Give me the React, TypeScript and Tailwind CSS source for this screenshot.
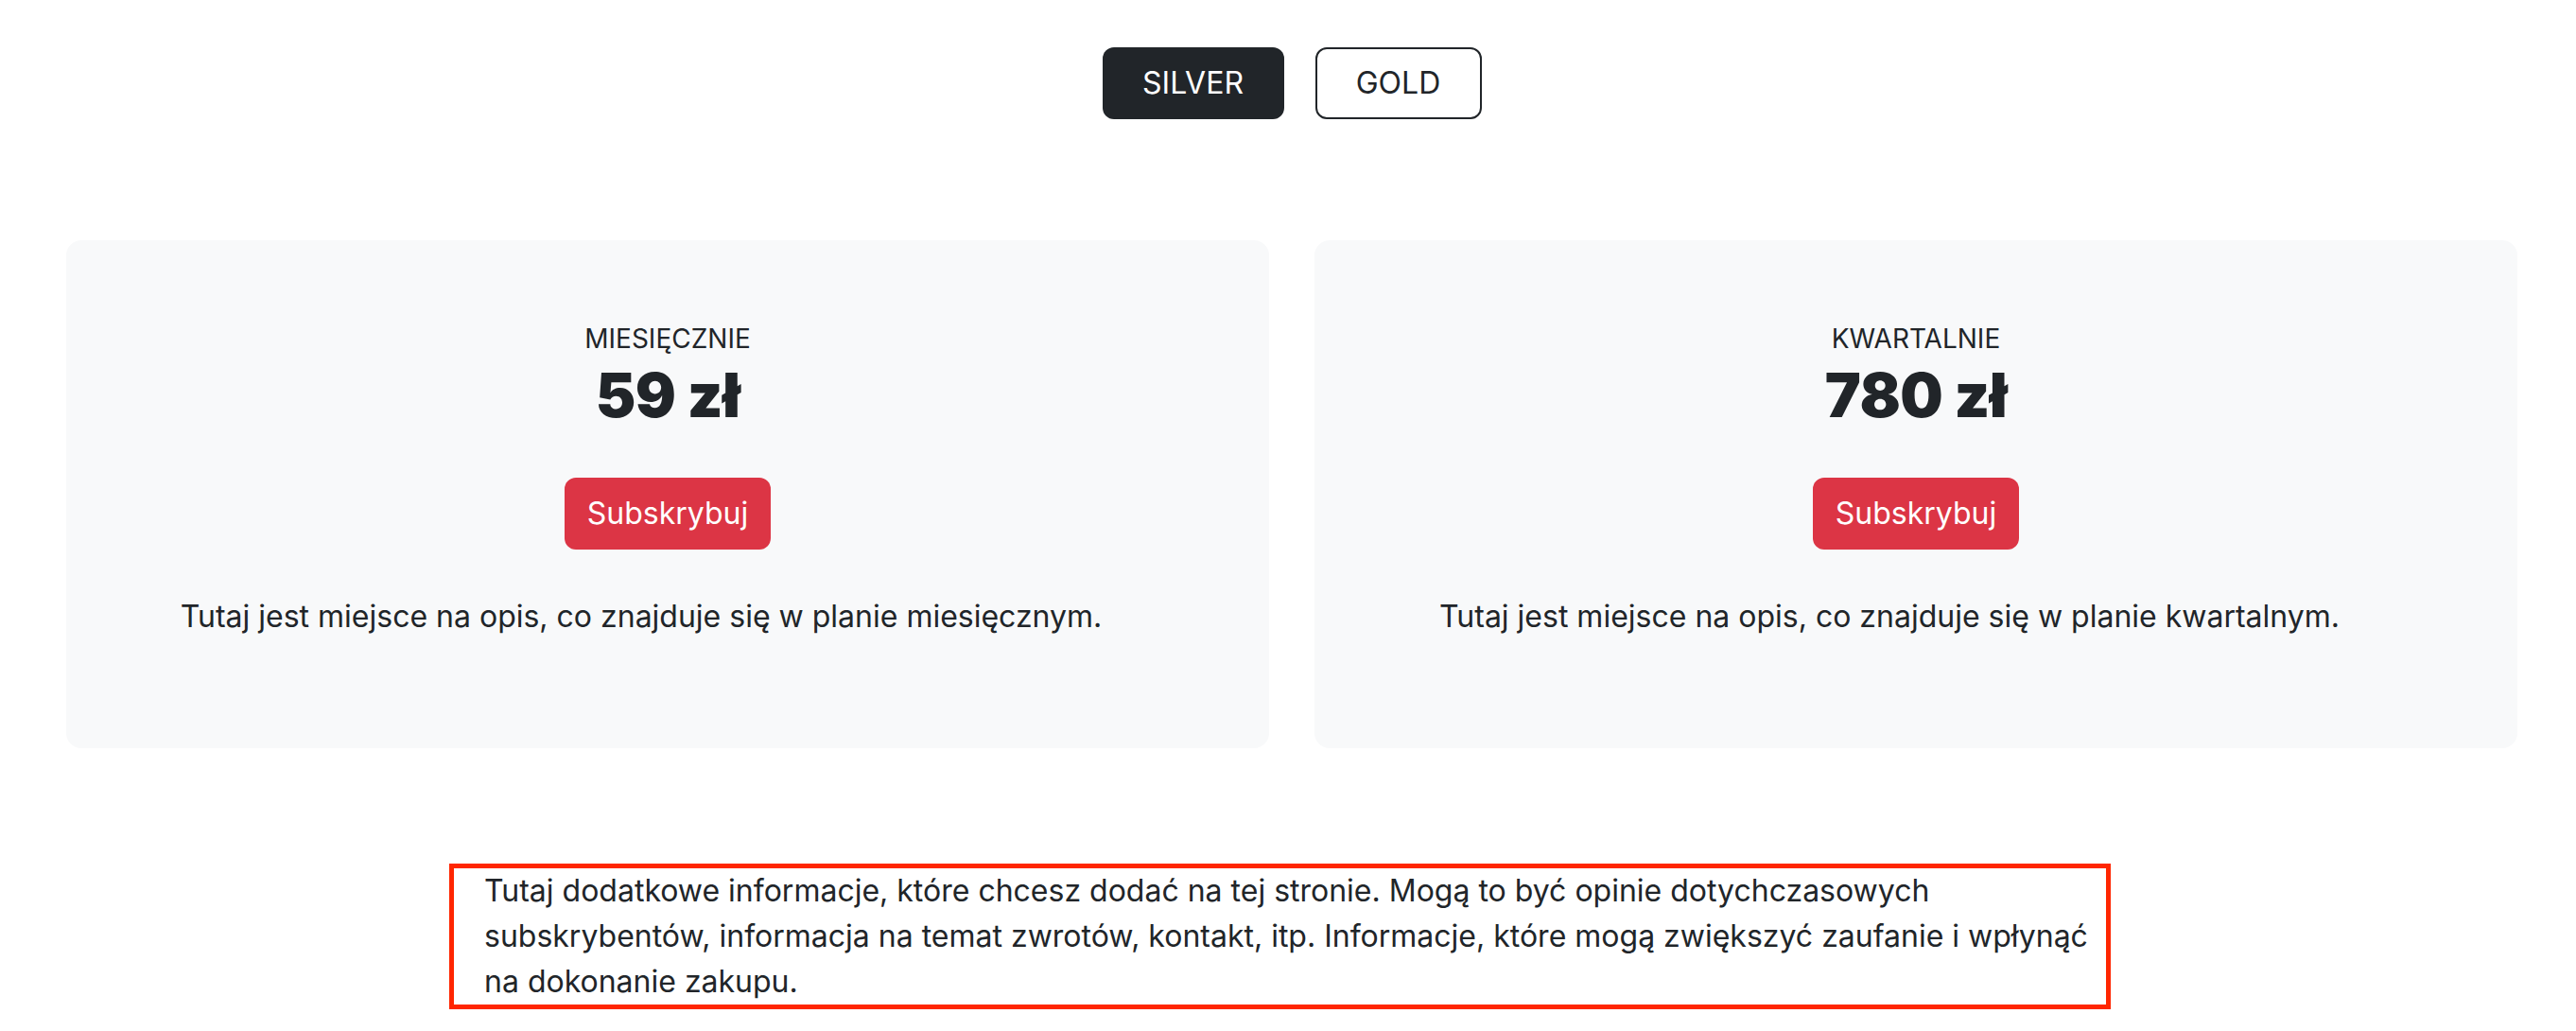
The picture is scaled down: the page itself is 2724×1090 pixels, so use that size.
// Strona subskrypcji — plany SILVER / GOLD

const PLANY = [
  {
    id: 'miesiecznie',
    nazwa: 'MIESIĘCZNIE',
    cena: '59 zł',
    opis: 'Tutaj jest miejsce na opis, co znajduje się w planie miesięcznym.',
  },
  {
    id: 'kwartalnie',
    nazwa: 'KWARTALNIE',
    cena: '780 zł',
    opis: 'Tutaj jest miejsce na opis, co znajduje się w planie kwartalnym.',
  },
];

export default function App() {
  return (
    <div
      className="min-h-screen bg-white text-[#212529] pl-[70px] pr-[62px]"
      style={{ fontFamily: 'Inter, "Noto Sans", sans-serif' }}
    >
      {/* Przełącznik planów */}
      <div className="flex justify-center gap-[33px] pt-[50px]">
        <button className="h-[76px] w-[192px] rounded-[12px] bg-[#212529] text-white text-[32px] leading-[48px]">
          SILVER
        </button>
        <button className="h-[76px] w-[176px] rounded-[12px] border-2 border-[#212529] bg-white text-[#212529] text-[32px] leading-[48px]">
          GOLD
        </button>
      </div>

      {/* Karty */}
      <div className="mt-[128px] grid grid-cols-2 gap-[48px]">
        {PLANY.map((plan) => (
          <div
            key={plan.id}
            className="h-[537px] rounded-[16px] bg-[#f8f9fa] pt-[83px] flex flex-col items-center text-center"
          >
            <p className="text-[28px] leading-[42px]">{plan.nazwa}</p>
            <h2 className="text-[64px] leading-[77px] font-black tracking-[-0.5px]">
              {plan.cena}
            </h2>
            <button className="mt-[49px] h-[76px] px-[24px] rounded-[12px] bg-[#dc3545] text-white text-[32px] leading-[48px]">
              Subskrybuj
            </button>
            <p className="mt-[47px] pr-[56px] text-[32px] leading-[48px]">{plan.opis}</p>
          </div>
        ))}
      </div>

      {/* Dodatkowe informacje */}
      <div className="mt-[122px] ml-[405px] w-[1757px] border-[5px] border-[#ff2600] pl-[32px] pr-[16px] text-[32px] leading-[48px]">
        Tutaj dodatkowe informacje, które chcesz dodać na tej stronie. Mogą to być opinie
        dotychczasowych subskrybentów, informacja na temat zwrotów, kontakt, itp.
        Informacje, które mogą zwiększyć zaufanie i wpłynąć na dokonanie zakupu.
      </div>
    </div>
  );
}
